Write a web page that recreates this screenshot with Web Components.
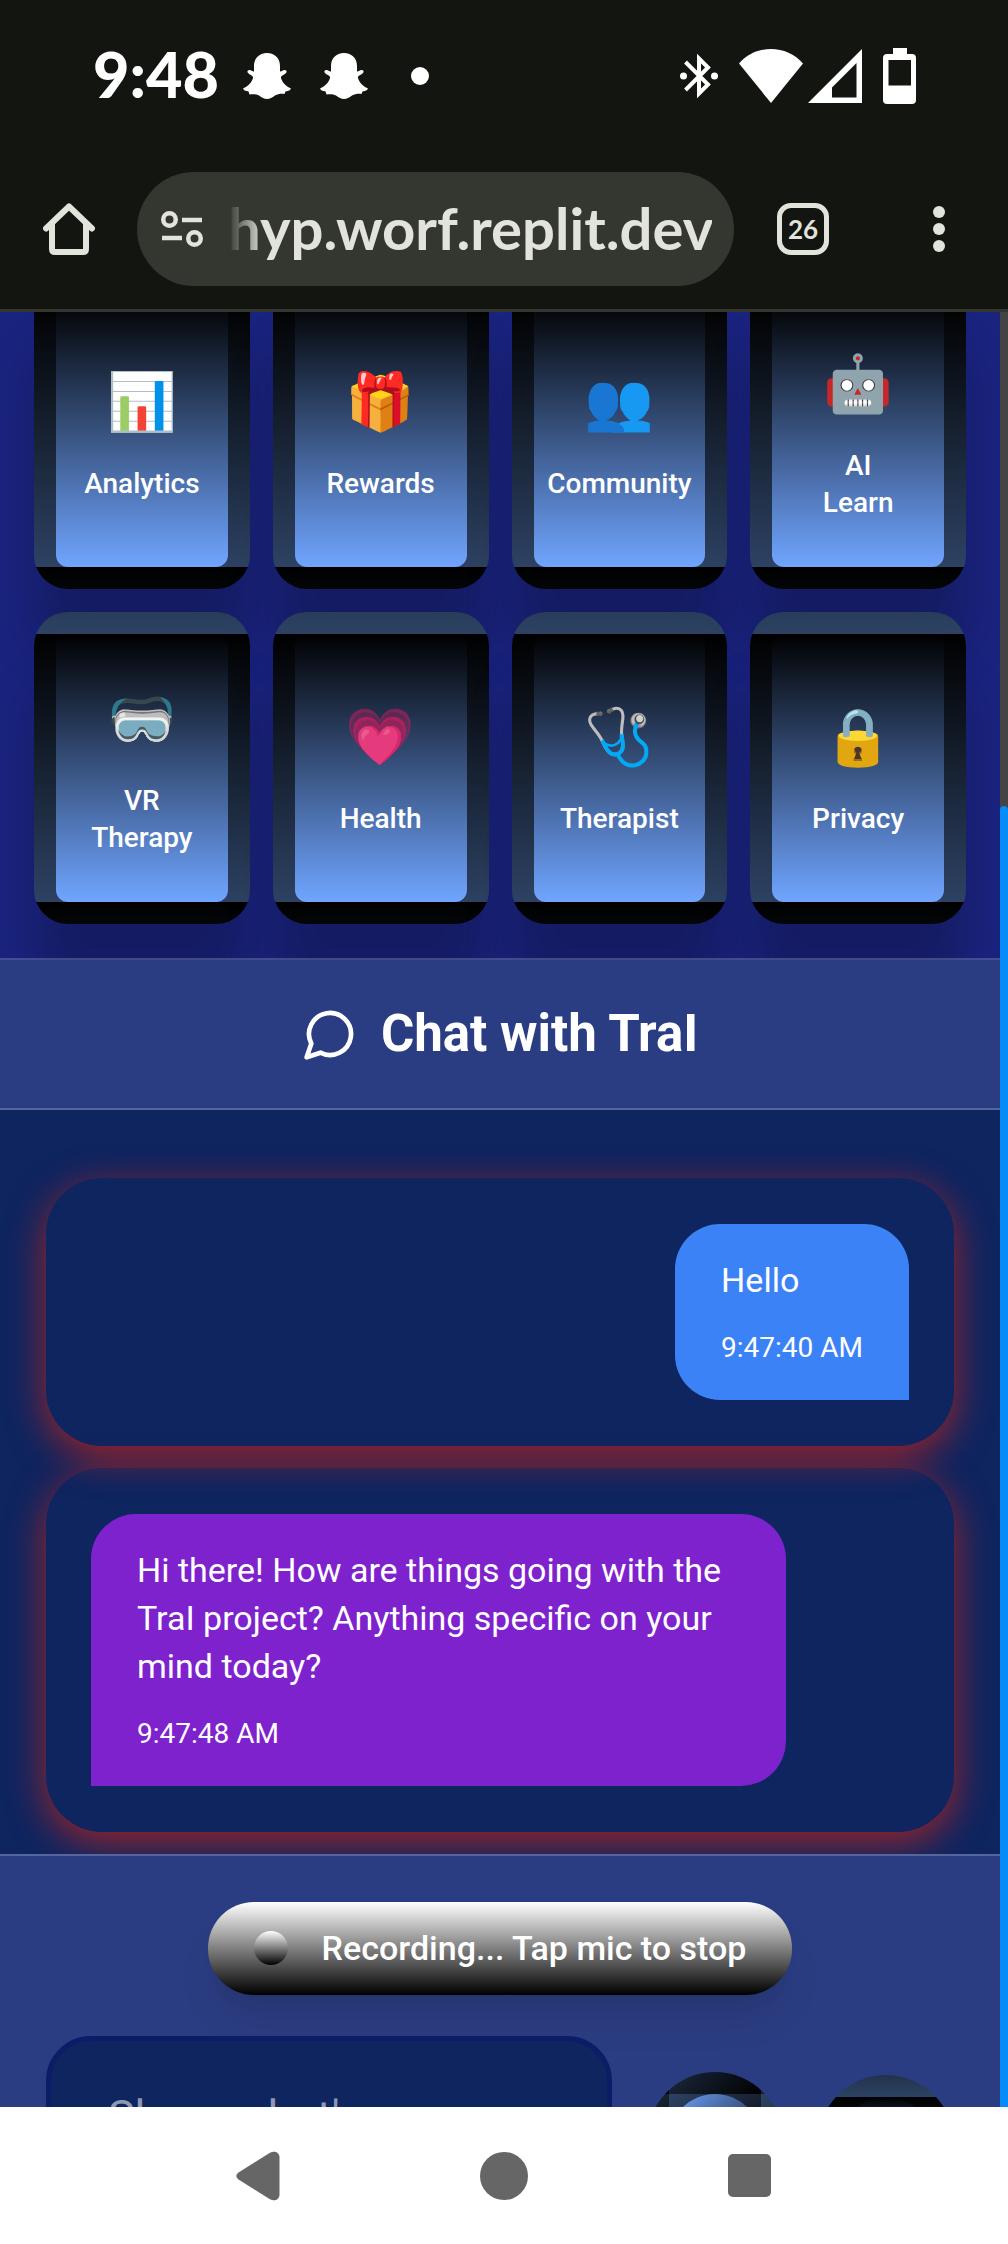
<!DOCTYPE html>
<html lang="en">
<head>
<meta charset="utf-8">
<meta name="viewport" content="width=device-width, initial-scale=1">
<title>Chat with TraI</title>
<style>
  html, body { margin: 0; height: 100%; }
  body { font-family: Roboto, "Noto Sans", sans-serif; color: #fff; background: #fff; }
</style>
</head>
<body>
<phone-screen>
  <status-bar slot="top" time="9:48"></status-bar>
  <browser-bar slot="top" address="hyp.worf.replit.dev" tabs="26"></browser-bar>
  <feature-grid>
    <feature-card icon="📊">Analytics</feature-card>
    <feature-card icon="🎁">Rewards</feature-card>
    <feature-card icon="👥">Community</feature-card>
    <feature-card icon="🤖">AI Learn</feature-card>
    <feature-card icon="🥽">VR Therapy</feature-card>
    <feature-card icon="💗">Health</feature-card>
    <feature-card icon="🩺">Therapist</feature-card>
    <feature-card icon="🔒">Privacy</feature-card>
  </feature-grid>
  <chat-header>Chat with TraI</chat-header>
  <chat-log>
    <chat-message from="user" time="9:47:40 AM">Hello</chat-message>
    <chat-message from="bot" time="9:47:48 AM">Hi there! How are things going with the TraI project? Anything specific on your mind today?</chat-message>
  </chat-log>
  <chat-composer placeholder="Share what's on your mind...">
    <recording-pill>Recording... Tap mic to stop</recording-pill>
  </chat-composer>
  <system-nav slot="bottom"></system-nav>
</phone-screen>

<script>
  const define = (name, render) => customElements.define(name, class extends HTMLElement {
    constructor() {
      super();
      this.attachShadow({ mode: 'open' }).innerHTML = render(this);
    }
  });

  define('phone-screen', () => `
    <style>
      :host { display: flex; flex-direction: column; height: 100vh; overflow: hidden; }
      .view { flex: 1; min-height: 0; display: flex; background: #1a237e; }
      main { flex: 1; min-width: 0; overflow: hidden; }
      .track { width: 8px; background: #444; display: flex; flex-direction: column; justify-content: flex-end; }
      .thumb { height: 72.5%; background: #058cf8; border-radius: 4px 4px 0 0; }
    </style>
    <header><slot name="top"></slot></header>
    <div class="view">
      <main><slot></slot></main>
      <div class="track"><div class="thumb"></div></div>
    </div>
    <slot name="bottom"></slot>`);

  const ghost = `<svg width="48" height="46" viewBox="0 0 48 46" fill="#fff"><path d="M24 0C32 0 37 5.500 37 13V18.500C38.500 19 40 16.500 42.500 17.200C44.500 18 43.500 20 41.500 21.300C39.500 22.500 37.500 23 38 25C39.500 29.500 42.500 33 48 35.500C47 38 44 38 42.500 38.500L41.500 41C38 40.500 35 41 32 42.500C29 44.500 27 46 24 46C21 46 19 44.500 16 42.500C13 41 10 41 6.500 41.500L5.500 38.500C4 38 1 38 0 35.500C5.500 33 8.500 29.500 10 25C10.500 23 8.500 22.500 6.500 21.300C4.500 20 3.500 18 5.500 17.200C8 16.500 9.500 19 11 18.500V13C11 5.500 16 0 24 0Z"/></svg>`;

  define('status-bar', el => `
    <style>
      :host { display: flex; align-items: center; justify-content: space-between; height: 152px; padding: 0 92px 0 93px; background: #131510; color: #fff; }
      .left, .right { display: flex; align-items: center; }
      time { font: 900 63px/74px Lato, sans-serif; padding-bottom: 4px; margin-right: 24px; }
      .ghosts { display: flex; gap: 29px; margin-right: 43px; }
      svg { display: block; }
      .right { gap: 21px; }
      .net { display: flex; gap: 5px; }
    </style>
    <div class="left">
      <time>${el.getAttribute('time')}</time>
      <div class="ghosts">${ghost}${ghost}</div>
      <svg width="18" height="18"><circle cx="9" cy="9" r="9" fill="#fff"/></svg>
    </div>
    <div class="right">
      <svg width="38" height="44" viewBox="0 0 38 44" fill="none" stroke="#fff" stroke-width="4"><path d="M5.500 8L28 30.500L19 39.500V4.500L28 13.500L5.500 36"/><g fill="#fff" stroke="none"><circle cx="3.500" cy="22" r="3.500"/><circle cx="34.500" cy="22" r="3.500"/></g></svg>
      <div class="net">
        <svg width="64" height="54" viewBox="0 0 64 54" fill="#fff"><path d="M0 14.500C8 5 20 0 32 0S56 5 64 14.500L32 54Z"/></svg>
        <svg width="54" height="54" viewBox="0 0 54 54" fill="#fff"><path fill-rule="evenodd" d="M54 0V54H0ZM48.500 14L24 38.500V48.500H48.500Z"/></svg>
      </div>
      <svg width="33" height="56" viewBox="0 0 33 56" fill="#fff"><path fill-rule="evenodd" d="M10 0H24V6H29Q33 6 33 10V52Q33 56 29 56H4Q0 56 0 52V10Q0 6 4 6H10ZM5.500 12V37.500H28V12Z"/></svg>
    </div>`);

  define('browser-bar', el => `
    <style>
      :host { display: flex; align-items: center; height: 154px; padding: 0 63px 3px 43px; background: #131510; border-bottom: 3px solid #34362f; color: #e2e4dc; font-family: Lato, sans-serif; }
      button { all: unset; display: block; }
      svg { display: block; }
      form { flex: 1; min-width: 0; display: flex; align-items: center; gap: 25px; height: 114px; margin: 0 43px 0 42px; padding: 0 22px 0 24px; box-sizing: border-box; background: #343630; border-radius: 57px; }
      input { flex: 1; min-width: 0; border: 0; padding: 0 0 2px; outline: 0; background: none; color: inherit; font: 700 58px/72px Lato, sans-serif; text-align: right; -webkit-mask-image: linear-gradient(90deg, transparent, #000 36px); mask-image: linear-gradient(90deg, transparent, #000 36px); }
      .tabs { width: 52px; height: 52px; box-sizing: border-box; border: 5px solid; border-radius: 14px; text-align: center; font: 700 26px/42px Lato, sans-serif; margin-right: 104px; }
    </style>
    <button aria-label="Home"><svg width="52" height="52" viewBox="0 0 52 52" fill="none" stroke="currentColor" stroke-width="6" stroke-linejoin="round" stroke-linecap="round"><path d="M3 25.500L26 3.500L49 25.500" /><path d="M9 21V46Q9 49 12 49H40Q43 49 43 46V21"/></svg></button>
    <form>
      <svg width="42" height="36" viewBox="0 0 42 36" fill="none" stroke="currentColor" stroke-width="4.500"><circle cx="8.500" cy="8.500" r="6.250"/><path d="M21 9H41M1 27H21"/><circle cx="33.500" cy="27.500" r="6.250"/></svg>
      <input type="text" aria-label="Address" value="${el.getAttribute('address')}">
    </form>
    <button class="tabs" aria-label="Tabs">${el.getAttribute('tabs')}</button>
    <button aria-label="Menu"><svg width="12" height="46" fill="currentColor"><circle cx="6" cy="6" r="6"/><circle cx="6" cy="23" r="6"/><circle cx="6" cy="40" r="6"/></svg></button>`);

  define('feature-grid', () => `
    <style>
      :host { display: grid; grid-template-columns: repeat(4, minmax(0, 1fr)); gap: 23px; margin-top: -35px; padding: 0 34px 34px; }
    </style>
    <slot></slot>`);

  define('feature-card', el => `
    <style>
      :host { display: flex; }
      button { flex: 1; display: flex; min-width: 0; min-height: 312px; padding: 0; font: inherit; color: #fff; border: 22px solid transparent; border-radius: 34px; background: linear-gradient(#000, #2d4263); box-shadow: 0 68px 48px -3px rgba(0,0,0,.21); }
      .face { flex: 1; min-width: 0; display: flex; flex-direction: column; align-items: center; justify-content: center; align-self: stretch; border-radius: 12px; background: linear-gradient(#000, #70a5ff); }
      .icon { font: 56px/78px "Noto Color Emoji", sans-serif; margin-bottom: 24px; }
      .label { width: min-content; font-weight: 500; font-size: 28px; line-height: 37px; text-align: center; padding-bottom: 1px; }
    </style>
    <button><span class="face"><span class="icon" aria-hidden="true">${el.getAttribute('icon')}</span><span class="label"><slot></slot></span></span></button>`);

  define('chat-header', () => `
    <style>
      :host { display: block; position: relative; border: solid rgba(255,255,255,.2); border-width: 2px 0; border-bottom-color: #56659b; background: #2b3d82 padding-box; }
      h2 { margin: 0; min-height: 148px; display: flex; align-items: center; justify-content: center; gap: 23px; font-size: 51px; line-height: 64px; font-weight: 700; }
    </style>
    <h2><svg width="56" height="56" viewBox="0 0 24 24" fill="none" stroke="currentColor" stroke-width="2" stroke-linecap="round" stroke-linejoin="round"><path d="M7.900 20A9 9 0 1 0 4 16.100L2 22Z"/></svg><span><slot></slot></span></h2>`);

  define('chat-log', () => `
    <style>
      :host { display: flex; flex-direction: column; gap: 22px; position: relative; overflow: hidden; padding: 68px 46px 22px; background: #0e2560; }
    </style>
    <slot></slot>`);

  define('chat-message', el => `
    <style>
      :host { display: flex; padding: 46px 45px; border-radius: 56px; box-shadow: 0 10px 38px rgba(255,35,0,.6); }
      :host([from="user"]) { justify-content: flex-end; }
      .bubble { max-width: 85%; box-sizing: border-box; padding: 32px 46px; border-radius: 45px; }
      :host([from="user"]) .bubble { background: #3b82f6; border-bottom-right-radius: 0; }
      :host([from="bot"]) .bubble { background: #7e22ce; border-bottom-left-radius: 0; }
      p { margin: 0 0 24px; font-size: 34px; line-height: 48px; }
      time { display: block; font-size: 28px; line-height: 40px; }
    </style>
    <div class="bubble"><p><slot></slot></p><time>${el.getAttribute('time')}</time></div>`);

  define('recording-pill', () => `
    <style>
      :host { display: flex; align-items: center; gap: 34px; padding: 22px 46px 23px; border-radius: 46px; font-size: 34px; line-height: 48px; font-weight: 500; background: linear-gradient(#fff, #000); box-shadow: 0 28px 42px -8px rgba(0,0,0,.1), 0 11px 17px -11px rgba(0,0,0,.1); }
      i { width: 34px; height: 34px; border-radius: 50%; background: linear-gradient(#fff, #000); }
    </style>
    <i></i><span><slot></slot></span>`);

  define('chat-composer', el => `
    <style>
      :host { display: flex; flex-direction: column; align-items: center; gap: 41px; position: relative; padding: 46px; border-top: 2px solid #56659b; background: #2b3d82; }
      .row { align-self: stretch; display: flex; align-items: center; gap: 35px; }
      textarea { flex: 1; min-width: 0; height: 214px; box-sizing: border-box; margin: 0; padding: 45px 57px; resize: none; overflow: hidden; border: 5px solid #0c1c66; border-radius: 45px; background: #0e2560; color: #fff; font: 400 45px/62px Roboto, sans-serif; }
      textarea::placeholder { color: rgba(255,255,255,.55); }
      button { flex: none; display: flex; width: 136px; height: 136px; padding: 0; border: 22px solid transparent; border-radius: 50%; background: linear-gradient(#000, #2d4263); }
      button span { flex: 1; align-self: stretch; border-radius: 50%; background: linear-gradient(#000, #70a5ff); }
      .mic { background: linear-gradient(315deg, #000, #2d4263); transform: translateY(-3px); }
      .mic span { background: linear-gradient(315deg, #000, #70a5ff); }
    </style>
    <slot></slot>
    <div class="row">
      <textarea aria-label="Message" placeholder="${el.getAttribute('placeholder')}"></textarea>
      <button class="mic" aria-label="Stop recording"><span></span></button>
      <button aria-label="Send"><span></span></button>
    </div>`);

  define('system-nav', () => `
    <style>
      :host { display: flex; align-items: center; justify-content: center; gap: 198px; height: 137px; background: #fff; position: relative; }
      button { all: unset; display: block; }
      svg { display: block; fill: #666; }
    </style>
    <button aria-label="Back"><svg width="48" height="50" viewBox="0 0 48 50"><path d="M4.500 21.500L36 1.800C40 -.5 45.500 1 45.500 6.500V43.500C45.500 49 40 50.500 36 48.200L4.500 28.500Q0 25 4.500 21.500Z"/></svg></button>
    <button aria-label="Home"><svg width="48" height="48"><circle cx="24" cy="24" r="24"/></svg></button>
    <button aria-label="Recent apps"><svg width="48" height="43"><rect x="2" width="43" height="43" rx="5"/></svg></button>`);
</script>
</body>
</html>
